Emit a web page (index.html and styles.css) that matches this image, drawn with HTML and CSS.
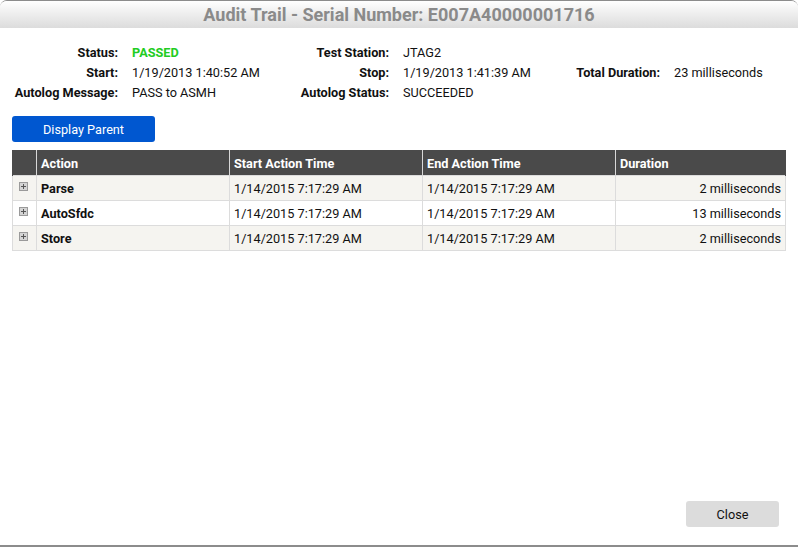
FILE: index.html
```html
<!DOCTYPE html>
<html>
<head>
<meta charset="utf-8">
<title>Audit Trail</title>
<link rel="stylesheet" href="styles.css">
</head>
<body>
<div class="dialog">
  <div class="titlebar">Audit Trail - Serial Number: E007A40000001716</div>
  <div class="content">
    <div class="info">
      <div class="lbl">Status:</div><div class="val passed">PASSED</div>
      <div class="lbl">Test Station:</div><div class="val">JTAG2</div>
      <div></div><div></div>
      <div class="lbl">Start:</div><div class="val">1/19/2013 1:40:52 AM</div>
      <div class="lbl">Stop:</div><div class="val">1/19/2013 1:41:39 AM</div>
      <div class="lbl">Total Duration:</div><div class="val">23 milliseconds</div>
      <div class="lbl">Autolog Message:</div><div class="val">PASS to ASMH</div>
      <div class="lbl">Autolog Status:</div><div class="val">SUCCEEDED</div>
      <div></div><div></div>
    </div>
    <button class="btn-primary">Display Parent</button>
    <table class="grid">
      <colgroup>
        <col class="c-exp"><col class="c-act"><col class="c-time"><col class="c-time"><col>
      </colgroup>
      <thead>
        <tr><th></th><th>Action</th><th>Start Action Time</th><th>End Action Time</th><th>Duration</th></tr>
      </thead>
      <tbody>
        <tr class="alt">
          <td class="exp"><svg width="9" height="9" viewBox="0 0 9 9"><rect x="0.5" y="0.5" width="8" height="8" fill="#d4d4d4" stroke="#9a9a9a"/><path d="M4.5 2v5M2 4.5h5" stroke="#555" stroke-width="1"/></svg></td>
          <td class="name">Parse</td><td>1/14/2015 7:17:29 AM</td><td>1/14/2015 7:17:29 AM</td><td class="num">2 milliseconds</td>
        </tr>
        <tr>
          <td class="exp"><svg width="9" height="9" viewBox="0 0 9 9"><rect x="0.5" y="0.5" width="8" height="8" fill="#d4d4d4" stroke="#9a9a9a"/><path d="M4.5 2v5M2 4.5h5" stroke="#555" stroke-width="1"/></svg></td>
          <td class="name">AutoSfdc</td><td>1/14/2015 7:17:29 AM</td><td>1/14/2015 7:17:29 AM</td><td class="num">13 milliseconds</td>
        </tr>
        <tr class="alt">
          <td class="exp"><svg width="9" height="9" viewBox="0 0 9 9"><rect x="0.5" y="0.5" width="8" height="8" fill="#d4d4d4" stroke="#9a9a9a"/><path d="M4.5 2v5M2 4.5h5" stroke="#555" stroke-width="1"/></svg></td>
          <td class="name">Store</td><td>1/14/2015 7:17:29 AM</td><td>1/14/2015 7:17:29 AM</td><td class="num">2 milliseconds</td>
        </tr>
      </tbody>
    </table>
  </div>
  <div class="footer">
    <button class="btn-close">Close</button>
  </div>
</div>
</body>
</html>
```

FILE: styles.css
```css
html, body {
  margin: 0;
  padding: 0;
  background: #ffffff;
}
body {
  font-family: Roboto, "Liberation Sans", Arial, sans-serif;
  font-size: 12.7px;
  color: #111111;
}
.dialog {
  box-sizing: border-box;
  width: 798px;
  height: 547px;
  display: flex;
  flex-direction: column;
  border-top: 1px solid #8c8c8c;
  border-bottom: 2px solid #8c8c8c;
  border-radius: 7px 7px 0 0;
  overflow: hidden;
  background: #fff;
}
.titlebar {
  height: 27px;
  line-height: 27px;
  text-align: center;
  font-size: 18px;
  font-weight: bold;
  color: #8a8a8a;
  background: linear-gradient(to bottom, #ffffff 0%, #f2f2f2 35%, #dcdcdc 100%);
}
.content {
  flex: 1;
  padding: 14px 12px 0 12px;
  display: flex;
  flex-direction: column;
  align-items: flex-start;
}
.info {
  display: grid;
  grid-template-columns: 106px 144px 99px 143px 100px auto;
  column-gap: 14px;
  grid-auto-rows: 20px;
  align-items: center;
}
.lbl {
  text-align: right;
  font-weight: bold;
  white-space: nowrap;
}
.val {
  white-space: nowrap;
}
.passed {
  color: #22cc22;
  font-weight: bold;
}
.btn-primary {
  margin-top: 14px;
  width: 143px;
  height: 26px;
  border: none;
  border-radius: 3px;
  background: #0057d0;
  color: #fff;
  font-family: inherit;
  font-size: 12.7px;
  padding: 0;
}
.grid {
  margin-top: 8px;
  width: 774px;
  border-collapse: collapse;
  table-layout: fixed;
}
.c-exp { width: 24px; }
.c-act { width: 193px; }
.c-time { width: 193px; }
.grid th {
  box-sizing: border-box;
  height: 25px;
  background: #4a4a4a;
  color: #fff;
  text-align: left;
  font-weight: bold;
  padding: 2px 4px 0 4px;
  border: 1px solid #d8d8d8;
  border-top: none;
  border-bottom: none;
}
.grid th:first-child { border-left: 1px solid #4a4a4a; }
.grid th:last-child { border-right: 1px solid #4a4a4a; }
.grid td {
  height: 23px;
  padding: 1px 4px 0 4px;
  border: 1px solid #dcdcdc;
  white-space: nowrap;
}
.grid tr.alt td { background: #f5f4f0; }
.grid td.name { font-weight: bold; }
.grid td.num { text-align: right; }
.grid td.exp {
  padding: 0 0 0 6px;
  height: 24px;
  vertical-align: middle;
  line-height: 0;
}
.grid td.exp svg { position: relative; top: -1px; }
.footer {
  display: flex;
  justify-content: flex-end;
  padding: 0 19px 18px 0;
}
.btn-close {
  width: 93px;
  height: 26px;
  border: none;
  border-radius: 3px;
  background: #dcdcdc;
  color: #111111;
  font-family: inherit;
  font-size: 12.7px;
  padding: 0;
}
```
